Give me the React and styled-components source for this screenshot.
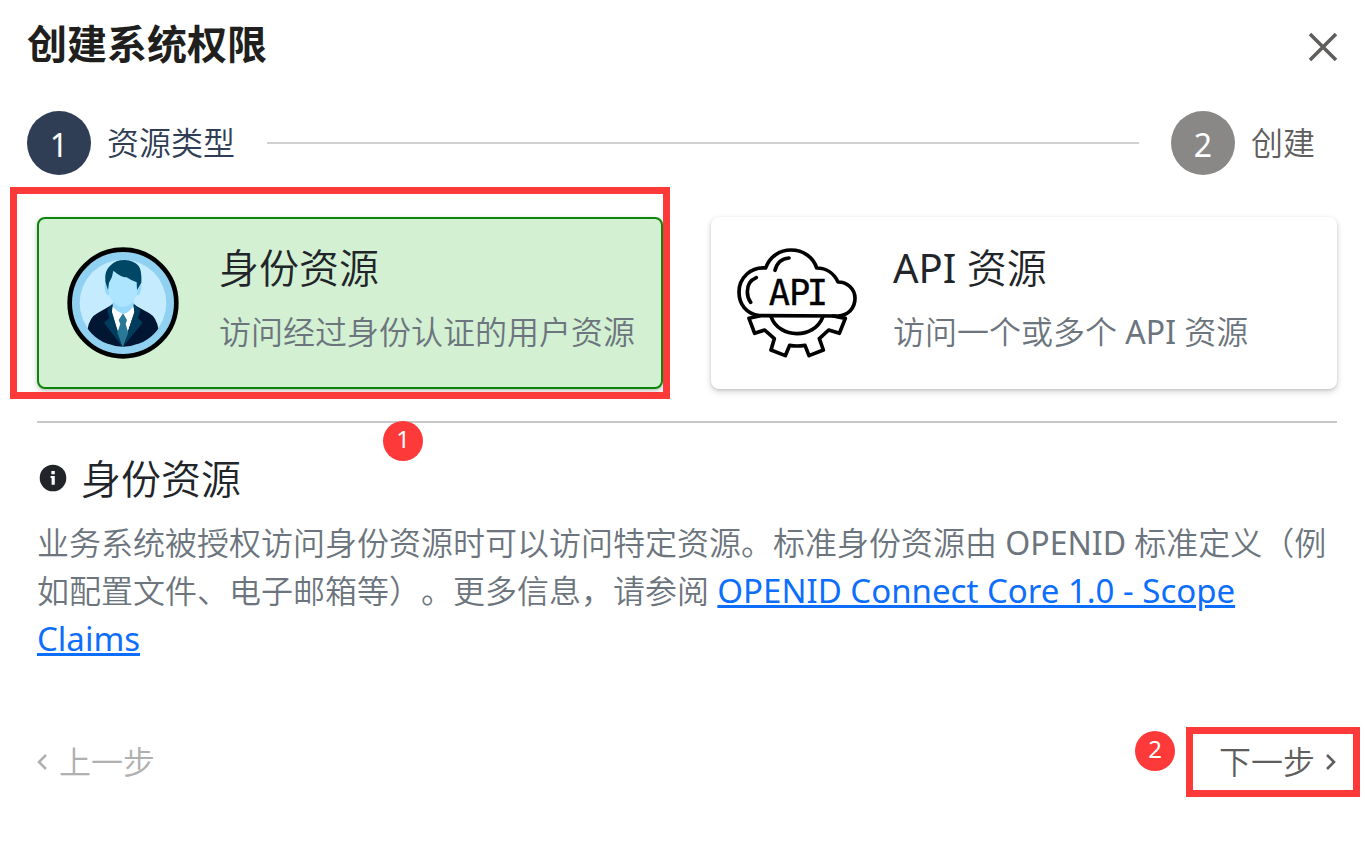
import React from 'react'
import styled, { createGlobalStyle } from 'styled-components'

const GlobalStyle = createGlobalStyle`
  * {
    box-sizing: border-box;
  }
  body {
    margin: 0;
    background: #ffffff;
    color: #212529;
    font-family: "Noto Sans", "Noto Sans CJK SC", sans-serif;
    font-size: 32px;
    font-weight: 350;
    line-height: 48px;
    text-spacing-trim: space-all;
  }
  h2, h3, h4, p, ol {
    margin: 0;
    padding: 0;
    font-weight: inherit;
  }
  button {
    border: 0;
    padding: 0;
    background: none;
    font: inherit;
    text-align: left;
    cursor: pointer;
  }
`

function CloseIcon() {
  return (
    <svg width="30" height="30" viewBox="0 0 30 30" fill="none" stroke="#605e5c" strokeWidth="3.6">
      <path d="M2 2L28 28M28 2L2 28" />
    </svg>
  )
}

function InfoIcon() {
  return (
    <svg width="32" height="32" viewBox="0 0 32 32">
      <circle cx="16" cy="15" r="13.3" fill="#212529" />
      <path d="M14.4 8h3.4v3.2h-3.4zM13.6 13h4.2v8.8h-3.2v-6.8h-1z" fill="#fff" />
    </svg>
  )
}

function Chevron({ flip }) {
  return (
    <svg width="12" height="18" viewBox="0 0 12 18" fill="none" stroke="currentColor" strokeWidth="2.6">
      <path d={flip ? 'M2 2L9 9L2 16' : 'M9 2L2 9L9 16'} />
    </svg>
  )
}

function IdentityIcon() {
  return (
    <svg width="120" height="120" viewBox="39 39 360 360">
      <defs>
        <clipPath id="portrait">
          <circle cx="219" cy="219" r="131" />
        </clipPath>
      </defs>
      <circle cx="219" cy="219" r="160" fill="#90d0f0" stroke="#000" strokeWidth="14" />
      <circle cx="219" cy="219" r="130" fill="#c5ebff" />
      <g clipPath="url(#portrait)">
        <path d="M112 300Q118 262 142 250L186 224L219 240L252 224L298 250Q320 262 326 300V360H112z" fill="#001633" />
        <path d="M188 226L184 246L218 350L254 246L250 226z" fill="#fff" />
        <path d="M188 220L172 240L178 264L162 278L217 350L186 246z" fill="#003c5c" />
        <path d="M250 220L272 240L264 264L278 278L219 350L253 246z" fill="#003c5c" />
        <path d="M219 250L206 270L211 282L202 308L218 350L235 308L227 282L231 270z" fill="#287896" />
      </g>
      <path d="M189 200H250V230Q236 248 219 252Q201 246 189 232z" fill="#97d9fb" />
      <path d="M166 158Q161 172 168 190Q171 198 178 196L178 158zM272 158Q277 172 270 190Q267 198 260 196L260 158z" fill="#97d9fb" />
      <path d="M176 150Q174 198 184 208Q200 231 219 231Q238 231 254 208Q264 198 262 150L220 110L190 118z" fill="#ade4ff" />
      <path d="M174 180L166 155Q162 122 182 106Q196 90 224 90Q252 91 266 108Q276 122 274 158L261 180L260 157Q244 152 230 142Q215 143 190 122Q188 142 177 158z" fill="#004766" />
    </svg>
  )
}

function ApiIcon() {
  return (
    <svg width="120" height="120" viewBox="51 39 360 360">
      <g fill="none" stroke="#000" strokeWidth="11" strokeLinecap="round" strokeLinejoin="round">
        <path d="M118 257C78 252 57 222 57 186C57 144 92 110 137 114C149 80 179 60 213 60C250 60 280 82 290 114C318 114 342 130 354 156C383 156 405 178 405 205C405 235 384 256 354 258z" />
        <path d="M165 121Q173 87 207 84M109 143Q82 154 82 185Q82 203 92 217" />
        <path d="M87 265L104 310L134 300L163 326L153 360L196 377L209 346Q231 350 255 346L267 377L310 360L298 326L326 300L358 310L376 265M87 265L118 258M376 265L340 258M154 262C178 326 282 328 308 262" />
      </g>
      <text
        x="146 207 260"
        y="226"
        fontFamily="DejaVu Sans Mono, monospace"
        fontSize="106"
        fontWeight="400"
        stroke="#000"
        strokeWidth="1"
      >
        API
      </text>
    </svg>
  )
}

function App() {
  return (
    <Dialog>
      <GlobalStyle />
      <Header>
        <Title>创建系统权限</Title>
        <Close aria-label="关闭">
          <CloseIcon />
        </Close>
      </Header>

      <Stepper>
        <Step $active>
          <StepNumber $active>1</StepNumber>
          资源类型
        </Step>
        <StepLine />
        <Step>
          <StepNumber>2</StepNumber>
          创建
        </Step>
      </Stepper>

      <Content>
        <Cards>
          <CardSlot>
            <Card $selected>
              <IdentityIcon />
              <CardText>
                <CardTitle>身份资源</CardTitle>
                <CardHint>访问经过身份认证的用户资源</CardHint>
              </CardText>
            </Card>
            <CardMark />
            <CardBadge>1</CardBadge>
          </CardSlot>
          <CardSlot>
            <Card>
              <ApiIcon />
              <CardText>
                <CardTitle><Latin>API </Latin>资源</CardTitle>
                <CardHint>访问一个或多个<Latin> API </Latin>资源</CardHint>
              </CardText>
            </Card>
          </CardSlot>
        </Cards>

        <Info>
          <InfoTitle>
            <InfoIcon />
            身份资源
          </InfoTitle>
          <InfoText>
            业务系统被授权访问身份资源时可以访问特定资源。标准身份资源由<Latin> OPENID </Latin>标准定义（例如配置文件、电子邮箱等）。更多信息，请参阅{' '}
            <InfoLink href="#scope-claims">OPENID Connect Core 1.0 - Scope Claims</InfoLink>
          </InfoText>
        </Info>

        <Footer>
          <NavButton disabled>
            <Chevron />
            上一步
          </NavButton>
          <NextSlot>
            <NavButton>
              下一步
              <Chevron flip />
            </NavButton>
            <NextMark />
            <NextBadge>2</NextBadge>
          </NextSlot>
        </Footer>
      </Content>
    </Dialog>
  )
}

export default App;

const Dialog = styled.main`
  padding: 20px 27px 56px 27px;
`;

// latin words need a step more weight than the chinese text round them
const Latin = styled.span`
  font-weight: 400;
`;

const Header = styled.header`
  display: flex;
  align-items: center;
  justify-content: space-between;
`;

const Title = styled.h2`
  color: #201f1e;
  font-size: 40px;
  font-weight: 700;
`;

const Close = styled.button`
  display: flex;
  margin-top: 6px;
`;

const Stepper = styled.ol`
  display: flex;
  align-items: center;
  gap: 32px;
  margin-top: 43px;
  padding-right: 23px;
  list-style: none;
`;

const Step = styled.li`
  display: flex;
  align-items: center;
  gap: 16px;
  color: ${props => props.$active ? '#2f3e54' : '#605e5c'};
`;

const StepNumber = styled.span`
  width: 64px;
  height: 64px;
  border-radius: 50%;
  background: ${props => props.$active ? '#2f3e54' : '#8a8886'};
  color: white;
  font-weight: 400;
  line-height: 68px;
  text-align: center;
`;

const StepLine = styled.li`
  flex: 1;
  height: 2px;
  background: #d0d0d0;
`;

const Content = styled.div`
  padding: 42px 1px 0 10px;
`;

const Cards = styled.div`
  display: grid;
  grid-template-columns: 1fr 1fr;
  gap: 48px;
`;

const CardSlot = styled.div`
  position: relative;
`;

const Card = styled.button`
  display: flex;
  align-items: center;
  gap: 36px;
  width: 100%;
  min-height: 172px;
  padding: 0 24px;
  border: 2px solid ${props => props.$selected ? '#0b860b' : 'white'};
  border-radius: 8px;
  background: ${props => props.$selected ? '#d3f0d3' : 'white'};
  box-shadow: 0 3px 7px rgba(0, 0, 0, 0.15), 0 1px 3px rgba(0, 0, 0, 0.15);
  color: #212529;

  svg {
    flex: none;
  }
`;

const CardText = styled.span`
  display: flex;
  flex-direction: column;
  gap: 16px;
  padding-bottom: 6px;
  white-space: nowrap;
`;

const CardTitle = styled.span`
  font-size: 40px;
`;

const CardHint = styled.span`
  color: #6c757d;
`;

const Mark = styled.span`
  position: absolute;
  border: 7px solid #fd3939;
  pointer-events: none;
`;

const CardMark = styled(Mark)`
  inset: -30px -7px -10px -27px;
`;

const NextMark = styled(Mark)`
  inset: -11px -23px -11px -33px;
`;

const Badge = styled.span`
  position: absolute;
  width: 40px;
  height: 40px;
  border-radius: 50%;
  background: #fd3939;
  color: white;
  font-size: 24px;
  font-weight: 400;
  line-height: 36px;
  text-align: center;
`;

const CardBadge = styled(Badge)`
  left: 346px;
  top: 204px;
`;

const NextBadge = styled(Badge)`
  right: 162px;
  top: -7px;
`;

const Info = styled.section`
  margin-top: 32px;
  padding-top: 32px;
  border-top: 2px solid #c8c8c8;
`;

const InfoTitle = styled.h3`
  display: flex;
  align-items: center;
  gap: 12px;
  font-size: 40px;
`;

const InfoText = styled.p`
  margin-top: 16px;
  color: #6c757d;
`;

const InfoLink = styled.a`
  color: #0d6efd;
  font-size: 33px;
  font-weight: 400;
  text-decoration: underline;
`;

const Footer = styled.footer`
  display: flex;
  align-items: center;
  justify-content: space-between;
  margin-top: 75px;
`;

const NavButton = styled.button`
  display: flex;
  align-items: center;
  gap: 10px;
  color: #605e5c;

  &:disabled {
    color: #b0b0b0;
  }
`;

const NextSlot = styled.div`
  position: relative;
`;
